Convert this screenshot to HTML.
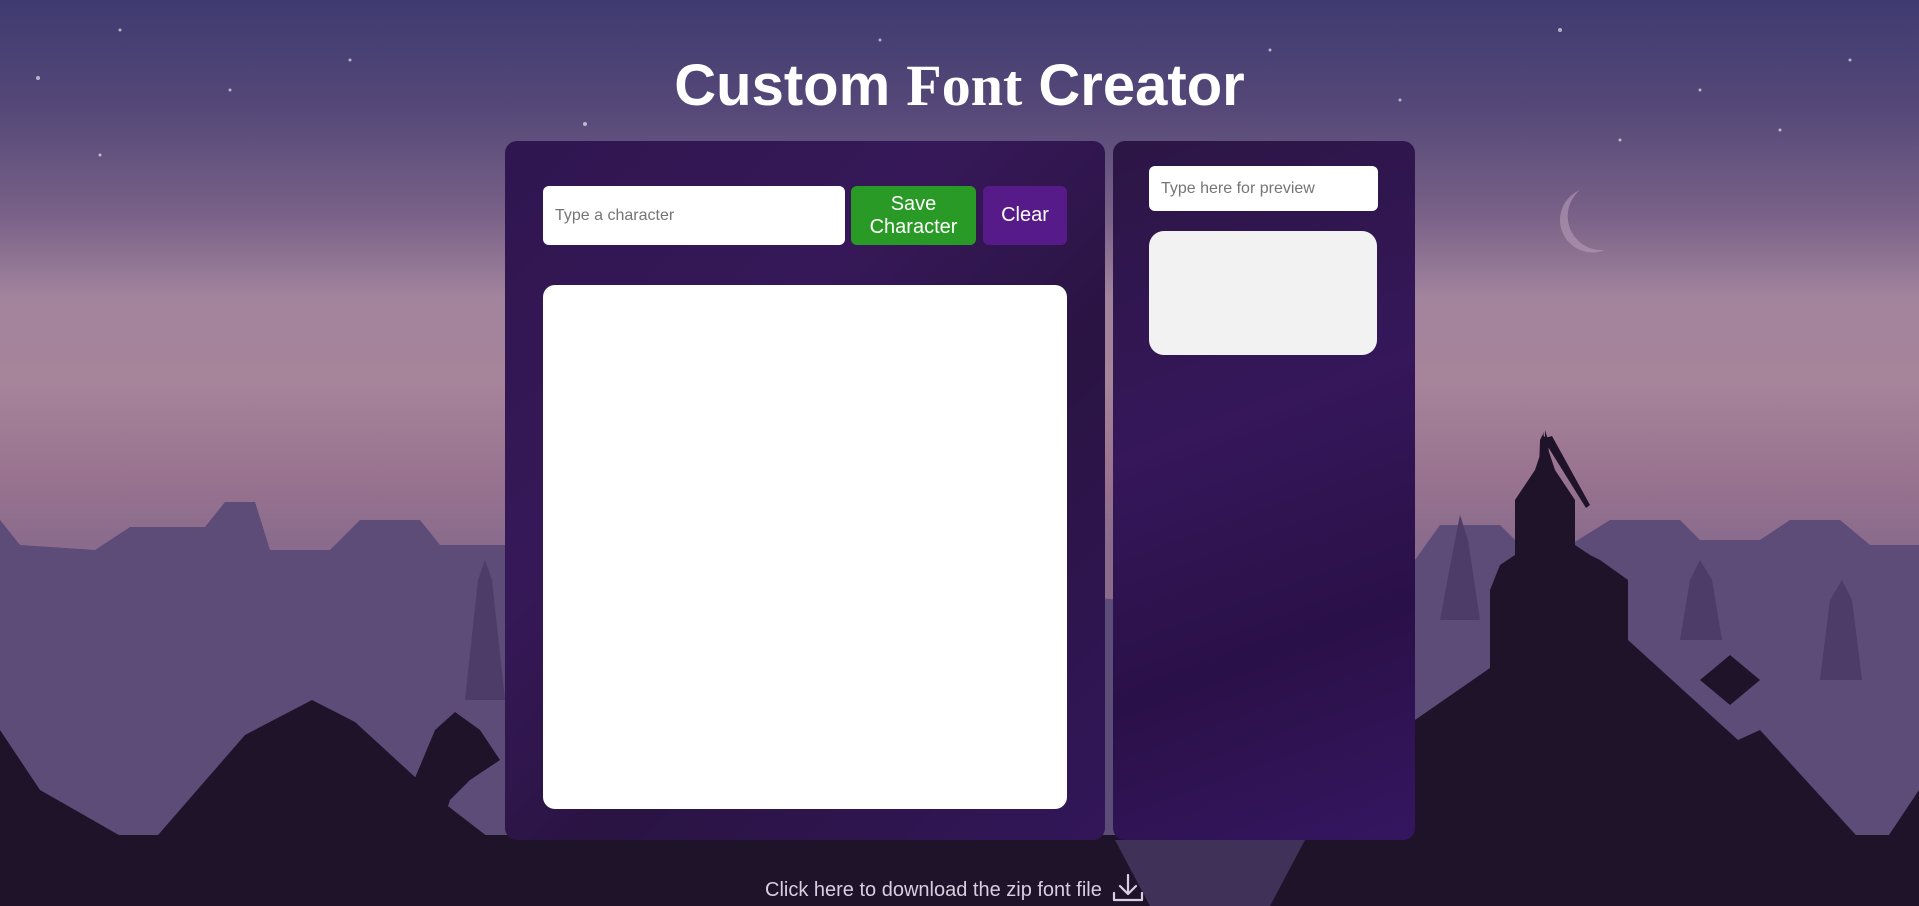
<!DOCTYPE html>
<html><head><meta charset="utf-8"><style>
html,body{margin:0;padding:0;width:1919px;height:906px;overflow:hidden;font-family:"Liberation Sans",sans-serif;}
body{position:relative;background:linear-gradient(180deg,#3f3b70 0%,#554878 12%,#7a6288 24%,#a3849d 33%,#a6849a 42%,#9a7490 52%,#8a6b8c 60%);}
svg.bg{position:absolute;left:0;top:0}
h1{position:absolute;left:0;width:1919px;top:52px;margin:0;text-align:center;color:#fff;font-size:58px;font-weight:bold;letter-spacing:0px;}
h1 .s{font-family:"Liberation Serif",serif;}
.panel{position:absolute;border-radius:12px;background:linear-gradient(135deg,#2f1650 0%,#361858 35%,#2a1443 60%,#321659 100%);}
.inp{position:absolute;background:#fff;border-radius:6px;color:#757575;font-size:16px;box-sizing:border-box;padding-left:12px;display:flex;align-items:center;}
.btn{position:absolute;border-radius:6px;color:#fff;font-size:20px;text-align:center;display:flex;align-items:center;justify-content:center;line-height:23px;}
.dl{position:absolute;top:879px;left:765px;color:#d6cfe0;font-size:20px;}
</style></head><body>
<svg class="bg" width="1919" height="906" viewBox="0 0 1919 906">
<g fill="#fff" opacity="0.6">
<circle cx="38" cy="78" r="2"/><circle cx="120" cy="30" r="1.5"/><circle cx="230" cy="90" r="1.5"/><circle cx="350" cy="60" r="1.5"/><circle cx="585" cy="124" r="2"/><circle cx="880" cy="40" r="1.5"/><circle cx="1270" cy="50" r="1.5"/><circle cx="1400" cy="100" r="1.5"/><circle cx="1560" cy="30" r="2"/><circle cx="1700" cy="90" r="1.5"/><circle cx="1850" cy="60" r="1.5"/><circle cx="1620" cy="140" r="1.5"/><circle cx="100" cy="155" r="1.5"/><circle cx="1780" cy="130" r="1.5"/>
</g>
<path d="M1580 190 a28 28 0 1 0 25 60 a34 34 0 0 1 -25 -60z" fill="#b89cb8" opacity="0.6"/>
<path fill="#5d4b78" d="M0 520 L20 545 L95 550 L130 527 L205 527 L225 502 L255 502 L270 550 L330 550 L360 520 L420 520 L440 545 L520 545 L1120 600 L1415 560 L1440 525 L1500 525 L1520 545 L1570 545 L1610 520 L1680 520 L1700 540 L1760 540 L1790 520 L1840 520 L1870 545 L1919 545 L1919 906 L0 906Z"/>
<path fill="#4d3c68" d="M465 700 L478 580 L485 560 L492 580 L505 700Z"/>
<path fill="#4d3c68" d="M1440 620 L1455 540 L1460 515 L1468 540 L1480 620Z M1680 640 L1690 580 L1700 560 L1712 580 L1722 640Z M1820 680 L1830 600 L1842 580 L1852 600 L1862 680Z"/>
<path fill="#1f1329" d="M0 730 L40 790 L145 850 L245 735 L312 700 L355 722 L440 800 L505 850 L505 906 L0 906Z"/>
<path fill="#1f1329" d="M410 790 L435 730 L455 712 L480 730 L500 760 L470 780 L450 800 L440 830Z"/>
<path fill="#1f1329" d="M1105 906 L1105 850 L1415 720 L1490 668 L1490 590 L1500 565 L1515 555 L1515 500 L1535 470 L1545 440 L1555 470 L1575 500 L1575 545 L1590 555 L1600 560 L1628 580 L1628 640 L1738 740 L1760 730 L1875 856 L1919 790 L1919 906Z"/>
<path fill="#1f1329" d="M1540 440 L1545 430 L1548 440 L1552 500 L1538 500Z M1545 430 Q1540 440 1552 436 L1590 505 L1586 508 L1545 442Z"/>
<path fill="#1f1329" d="M1700 680 L1730 655 L1760 680 L1730 705Z"/>
<path fill="#1f1329" d="M0 835 L1919 835 L1919 906 L0 906Z"/>
<path fill="#3f3158" d="M1115 840 L1305 840 L1270 906 L1150 906Z"/>
</svg>
<h1>Custom <span class="s">Font</span> Creator</h1>
<div class="panel" style="left:505px;top:141px;width:600px;height:699px;"></div>
<div class="panel" style="left:1113px;top:141px;width:302px;height:699px;background:linear-gradient(160deg,#2c1645 0%,#35175a 40%,#2a1048 70%,#341660 100%);"></div>
<div class="inp" style="left:543px;top:186px;width:302px;height:59px;">Type a character</div>
<div class="btn" style="left:851px;top:186px;width:125px;height:59px;background:#2a9a26;">Save<br>Character</div>
<div class="btn" style="left:983px;top:186px;width:84px;height:59px;background:#571a89;">Clear</div>
<div style="position:absolute;left:543px;top:285px;width:524px;height:524px;background:#fff;border-radius:12px;"></div>
<div class="inp" style="left:1149px;top:166px;width:229px;height:45px;font-size:16px;">Type here for preview</div>
<div style="position:absolute;left:1149px;top:231px;width:228px;height:124px;background:#f2f2f2;border-radius:15px;"></div>
<div class="dl">Click here to download the zip font file</div>
<svg style="position:absolute;left:1112px;top:873px" width="32" height="30" viewBox="0 0 32 30"><path d="M16 2 V20 M8 13 L16 21 L24 13 M2 20 V27 H30 V20" fill="none" stroke="#d6cfe0" stroke-width="2.2" stroke-linecap="round" stroke-linejoin="round"/></svg>
</body></html>
